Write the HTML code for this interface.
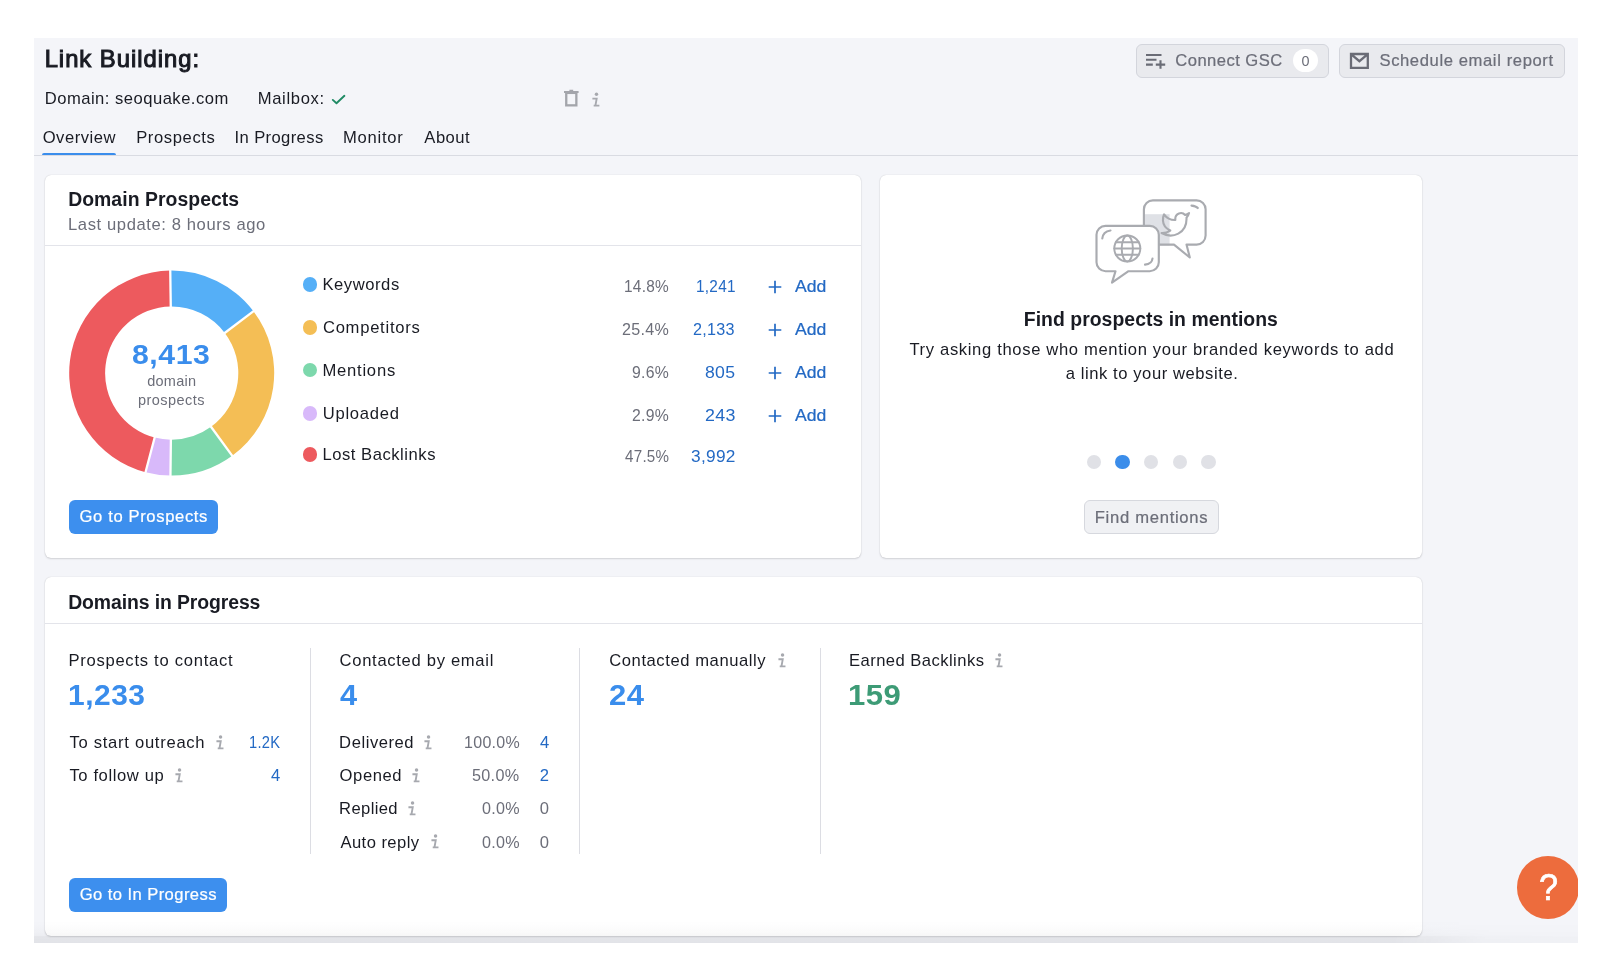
<!DOCTYPE html>
<html lang="en">
<head>
<meta charset="utf-8">
<title>Link Building: Overview</title>
<style>
*{box-sizing:border-box;margin:0;padding:0}
html,body{width:1600px;height:964px;background:#fff;overflow:hidden}
body{font-family:"Liberation Sans",sans-serif;color:#191b23;position:relative}
.app{position:absolute;left:34px;top:38px;width:1544px;height:905px;background:#f4f5f9;overflow:hidden;will-change:transform}
.t{position:absolute;line-height:1;white-space:nowrap;display:block;transform-origin:0 50%}
.sec{color:#6c6e79}
.lnk{color:#2369c4}
.big{color:#3a8dec}
.grn{color:#3d9b76}
.wht{color:#fff}
.h1{-webkit-text-stroke:1.05px #191b23}
.qm{-webkit-text-stroke:.7px #fff}
.med{-webkit-text-stroke:.22px currentColor}
.btxt{color:#6c6e79}
.bnum{color:#6c6e79}
.abs{position:absolute;display:block}
.inf{font-family:"Liberation Mono",monospace;font-style:italic;font-weight:700;color:#a9abb1;transform-origin:0 0}
/* header */
.tabs-line{position:absolute;left:0;top:117px;width:1544px;height:1px;background:#d9dbe2}
.tab-ul{position:absolute;left:8.4px;top:114.8px;width:73.6px;height:2.6px;background:#3a8dec;border-radius:2px 2px 0 0}
.btn{position:absolute;border-radius:6px;height:33.4px;border:0;padding:0;margin:0;font:inherit;color:inherit;text-align:left;cursor:pointer;display:block}
.btn.gray{background:#e9eaee;border:1px solid #d3d5dc}
.btn.blue{background:#3d8fee}
.btn.gray.lt{background:#f0f1f4;border-color:#d6d8de}
.badge{position:absolute;background:#fff;border-radius:12px}
/* cards */
.card{position:absolute;background:#fff;border-radius:6px;box-shadow:0 0 1px rgba(25,27,35,.22),0 1px 2px rgba(25,27,35,.14)}
.hr{position:absolute;left:0;height:1px;background:#e3e4ea;width:100%}
.vr{position:absolute;width:1px;background:#dcdde3}
.dot{position:absolute;border-radius:50%}
h1,h2,p{font:inherit;font-weight:inherit}
.fade{position:absolute;left:0;bottom:0;width:100%;height:22px;background:linear-gradient(to bottom,rgba(25,27,35,0) 0%,rgba(25,27,35,.012) 35%,rgba(25,27,35,.034) 66%,rgba(25,27,35,.066) 68%,rgba(25,27,35,.078) 100%);-webkit-mask-image:linear-gradient(to right,#000 0,#000 88%,rgba(0,0,0,.3) 94%,rgba(0,0,0,.25) 100%);mask-image:linear-gradient(to right,#000 0,#000 88%,rgba(0,0,0,.3) 94%,rgba(0,0,0,.25) 100%);pointer-events:none}
.help{position:absolute;border-radius:50%;background:#ed6c3d;border:0;padding:0;margin:0;font:inherit;cursor:pointer;display:block}
</style>
</head>
<body>
<div class="app">
  <header>
    <h1><span class="t h1" style="left:10.64px;top:9.00px;font-size:23.8px;letter-spacing:0.995px;">Link Building:</span></h1>
    <div class="meta">
      <span class="t" style="left:10.70px;top:53.00px;font-size:16.6px;letter-spacing:0.488px;">Domain: seoquake.com</span>
      <span class="t" style="left:223.70px;top:53.00px;font-size:16.6px;letter-spacing:0.669px;">Mailbox:</span>
      <svg class="abs" style="left:297px;top:55.5px" width="15" height="11" viewBox="0 0 15 11"><path d="M1.8 5.9 L5.5 9.2 L13.4 1.8" fill="none" stroke="#1f8a64" stroke-width="1.9" stroke-linecap="round" stroke-linejoin="round"/></svg>
      <svg class="abs" style="left:529px;top:50px" width="17" height="20" viewBox="0 0 17 20"><path d="M1 4h14.6M6.4 2.6h3.8" stroke="#a3a5ab" stroke-width="1.9" fill="none"/><rect x="3.25" y="4.9" width="10.1" height="12.45" fill="none" stroke="#a3a5ab" stroke-width="2.3"/></svg>
      <svg class="abs ico-i" style="left:558.30px;top:53.74px" width="7.89" height="15.52" viewBox="0 0 8 15"><circle cx="4.55" cy="1.95" r="1.75" fill="#a7a9af"/><path d="M0.4 6.35H4.75L3.45 13.5M1.7 13.5H7.5" fill="none" stroke="#a7a9af" stroke-width="1.9" stroke-linejoin="miter"/></svg>
    </div>
    <div class="actions">
      <button class="btn gray" style="left:1101.5px;top:6.2px;width:193.6px">
        <svg class="abs" style="left:8.8px;top:7.7px" width="22" height="18" viewBox="0 0 22 18"><path d="M1 2h15.5M1 6.8h10.5M1 11.6h6.8M10.8 11.6h9.4M15.5 7.3v8.5" fill="none" stroke="#6a6c76" stroke-width="2.1"/></svg>
        <span class="t btxt med" style="left:38.82px;top:7.80px;font-size:16.6px;letter-spacing:0.454px;">Connect GSC</span>
        <span class="badge" style="left:156.8px;top:4.1px;width:25px;height:23.2px"><span class="t bnum" style="left:8.12px;top:4.70px;font-size:14.4px;">0</span></span>
      </button>
      <button class="btn gray" style="left:1305.2px;top:6.2px;width:225.5px">
        <svg class="abs" style="left:8.85px;top:6.85px" width="21" height="18" viewBox="0 0 21 18"><path d="M2 2h16.8v13.9H2z M2.3 2.3l8.100 6.900 8.100-6.900" fill="none" stroke="#6a6c76" stroke-width="2.3" stroke-linejoin="miter"/></svg>
        <span class="t btxt med" style="left:39.28px;top:7.80px;font-size:16.6px;letter-spacing:0.609px;">Schedule email report</span>
      </button>
    </div>
    <nav class="tabs">
      <a><span class="t tab on" style="left:8.72px;top:92.00px;font-size:16.6px;letter-spacing:0.499px;">Overview</span></a><a><span class="t tab" style="left:102.20px;top:92.00px;font-size:16.6px;letter-spacing:0.613px;">Prospects</span></a><a><span class="t tab" style="left:200.60px;top:92.00px;font-size:16.6px;letter-spacing:0.374px;">In Progress</span></a><a><span class="t tab" style="left:309.05px;top:92.00px;font-size:16.6px;letter-spacing:0.729px;">Monitor</span></a><a><span class="t tab" style="left:390.35px;top:92.00px;font-size:16.6px;letter-spacing:0.478px;">About</span></a>
      <div class="tabs-line"></div>
      <div class="tab-ul"></div>
    </nav>
  </header>

  <section class="card" style="left:11px;top:137px;width:816.4px;height:382.7px">
    <span class="t ch" style="left:23.14px;top:15.00px;font-size:19.4px;letter-spacing:0.051px;font-weight:700;">Domain Prospects</span>
    <span class="t sec" style="left:23.05px;top:42.00px;font-size:16.6px;letter-spacing:0.594px;">Last update: 8 hours ago</span>
    <div class="hr" style="top:70px"></div>
    <svg class="abs" style="left:0;top:0" width="300" height="320" viewBox="0 0 300 320"><path d="M125.27 95.61A102.5 102.5 0 0 1 208.45 136.27L179.82 157.93A66.6 66.6 0 0 0 125.77 131.51Z" fill="#55aff7"/><path d="M208.45 136.27A102.5 102.5 0 0 1 187.24 280.81L166.03 251.84A66.6 66.6 0 0 0 179.82 157.93Z" fill="#f4be55"/><path d="M187.24 280.81A102.5 102.5 0 0 1 125.45 300.59L125.89 264.70A66.6 66.6 0 0 0 166.03 251.84Z" fill="#7dd8ac"/><path d="M125.45 300.59A102.5 102.5 0 0 1 100.52 297.20L109.69 262.49A66.6 66.6 0 0 0 125.89 264.70Z" fill="#d8b9fa"/><path d="M100.52 297.20A102.5 102.5 0 0 1 125.27 95.61L125.77 131.51A66.6 66.6 0 0 0 109.69 262.49Z" fill="#ed5a5e"/><path d="M125.78 132.51L125.25 94.61M179.02 158.53L209.25 135.67M165.44 251.04L187.83 281.62M125.90 263.70L125.44 301.59M109.94 261.52L100.26 298.17" stroke="#fff" stroke-width="2.3" fill="none"/></svg>
    <span class="t big" style="left:87.46px;top:166.00px;font-size:27.6px;letter-spacing:0.495px;font-weight:700;transform:scaleX(1.095);">8,413</span><span class="t sec" style="left:102.25px;top:199.00px;font-size:14.5px;letter-spacing:0.242px;">domain</span><span class="t sec" style="left:92.99px;top:218.00px;font-size:14.5px;letter-spacing:0.462px;">prospects</span>
    <div class="row">
    <span class="dot" style="left:257.80px;top:102.20px;width:14.4px;height:14.4px;background:#55aff7"></span>
    <span class="t" style="left:277.40px;top:102.00px;font-size:16.6px;letter-spacing:0.562px;">Keywords</span><span class="t sec" style="left:579.29px;top:104.00px;font-size:16.6px;letter-spacing:0.294px;transform:scaleX(0.928);">14.8%</span><span class="t lnk" style="left:650.54px;top:104.00px;font-size:16.6px;letter-spacing:0.297px;transform:scaleX(0.924);">1,241</span>
    <svg class="abs" style="left:723.20px;top:105.30px" width="14" height="14" viewBox="0 0 14 14"><path d="M.7 7h12.6M7 .7v12.6" stroke="#2369c4" stroke-width="1.7" fill="none"/></svg>
    <span class="t lnk med" style="left:750.30px;top:104.00px;font-size:16.6px;letter-spacing:0.038px;transform:scaleX(1.06);">Add</span>
    </div>
    <div class="row">
    <span class="dot" style="left:257.80px;top:145.30px;width:14.4px;height:14.4px;background:#f4be55"></span>
    <span class="t" style="left:277.92px;top:145.00px;font-size:16.6px;letter-spacing:0.741px;">Competitors</span><span class="t sec" style="left:577.25px;top:147.00px;font-size:16.6px;letter-spacing:0.304px;transform:scaleX(0.97);">25.4%</span><span class="t lnk" style="left:648.44px;top:147.00px;font-size:16.6px;letter-spacing:0.296px;transform:scaleX(0.974);">2,133</span>
    <svg class="abs" style="left:723.20px;top:147.90px" width="14" height="14" viewBox="0 0 14 14"><path d="M.7 7h12.6M7 .7v12.6" stroke="#2369c4" stroke-width="1.7" fill="none"/></svg>
    <span class="t lnk med" style="left:750.30px;top:147.00px;font-size:16.6px;letter-spacing:0.038px;transform:scaleX(1.06);">Add</span>
    </div>
    <div class="row">
    <span class="dot" style="left:257.80px;top:188.00px;width:14.4px;height:14.4px;background:#7dd8ac"></span>
    <span class="t" style="left:277.40px;top:188.00px;font-size:16.6px;letter-spacing:0.780px;">Mentions</span><span class="t sec" style="left:587.26px;top:190.00px;font-size:16.6px;letter-spacing:0.303px;transform:scaleX(0.95);">9.6%</span><span class="t lnk" style="left:660.05px;top:190.00px;font-size:16.6px;letter-spacing:0.294px;transform:scaleX(1.063);">805</span>
    <svg class="abs" style="left:723.20px;top:190.90px" width="14" height="14" viewBox="0 0 14 14"><path d="M.7 7h12.6M7 .7v12.6" stroke="#2369c4" stroke-width="1.7" fill="none"/></svg>
    <span class="t lnk med" style="left:750.30px;top:190.00px;font-size:16.6px;letter-spacing:0.038px;transform:scaleX(1.06);">Add</span>
    </div>
    <div class="row">
    <span class="dot" style="left:257.80px;top:231.30px;width:14.4px;height:14.4px;background:#d8b9fa"></span>
    <span class="t" style="left:277.66px;top:231.00px;font-size:16.6px;letter-spacing:0.757px;">Uploaded</span><span class="t sec" style="left:587.26px;top:233.00px;font-size:16.6px;letter-spacing:0.303px;transform:scaleX(0.95);">2.9%</span><span class="t lnk" style="left:659.77px;top:233.00px;font-size:16.6px;letter-spacing:0.298px;transform:scaleX(1.073);">243</span>
    <svg class="abs" style="left:723.20px;top:234.20px" width="14" height="14" viewBox="0 0 14 14"><path d="M.7 7h12.6M7 .7v12.6" stroke="#2369c4" stroke-width="1.7" fill="none"/></svg>
    <span class="t lnk med" style="left:750.30px;top:233.00px;font-size:16.6px;letter-spacing:0.038px;transform:scaleX(1.06);">Add</span>
    </div>
    <div class="row">
    <span class="dot" style="left:257.80px;top:272.40px;width:14.4px;height:14.4px;background:#ed5a5e"></span>
    <span class="t" style="left:277.40px;top:272.00px;font-size:16.6px;letter-spacing:0.540px;">Lost Backlinks</span><span class="t sec" style="left:580.01px;top:274.00px;font-size:16.6px;letter-spacing:0.305px;transform:scaleX(0.912);">47.5%</span><span class="t lnk" style="left:645.66px;top:274.00px;font-size:16.6px;letter-spacing:0.297px;transform:scaleX(1.04);">3,992</span>
    </div>
    <button class="btn blue" style="left:23.7px;top:325.3px;width:149.6px"><span class="t wht med" style="left:10.82px;top:8.70px;font-size:16.6px;letter-spacing:0.634px;">Go to Prospects</span></button>
  </section>
<section class="card" style="left:846.0px;top:137px;width:542.1px;height:382.7px">
  <svg class="abs" style="left:210.00px;top:20.00px" width="124" height="94" viewBox="0 0 124 94" fill="none" stroke="#a9abb0" stroke-width="2.15" stroke-linecap="round" stroke-linejoin="round"><rect x="54.7" y="19.2" width="24.9" height="31.2" fill="#dfe1e6" stroke="none"/><path d="M84 49.6H62.9A9 9 0 0 1 53.9 40.6V14.3A9 9 0 0 1 62.9 5.3H106.6A9 9 0 0 1 115.6 14.3V40.6A9 9 0 0 1 106.6 49.6H96.5L99.8 62.5L84 49.6Z"/><path d="M101.5 10.6Q106 11 107.8 13"/><path d="M23 3a10.9 10.9 0 0 1-3.14 1.53 4.48 4.48 0 0 0-7.86 3v1A10.66 10.66 0 0 1 3 4s-4 9 5 13a11.64 11.64 0 0 1-7 2c9 5 20 0 20-11.5a4.5 4.5 0 0 0-.08-.83A7.72 7.72 0 0 0 23 3z" transform="translate(70.3 14.3) scale(1.25)" stroke-width="1.7"/><path d="M57 76.2H59.8A9 9 0 0 0 68.8 67.2V39.8A9 9 0 0 0 59.8 30.8H15.5A9 9 0 0 0 6.5 39.8V67.2A9 9 0 0 0 15.5 76.2H25.5L22 87.6L38.5 76.2Z" fill="#fff"/><path d="M12.3 43.5Q13 36.5 20.5 35.5"/><path d="M62.5 63.5Q62 69 55 69.6"/><g stroke-width="1.95"><circle cx="37.3" cy="53.5" r="13"/><ellipse cx="37.3" cy="53.5" rx="5.6" ry="13"/><path d="M24.299999999999997 53.5h26M25.90 47.30h22.8M25.90 59.70h22.8"/></g></svg>
  <h2><span class="t ch" style="left:143.79px;top:135.00px;font-size:19.4px;letter-spacing:0.036px;font-weight:700;">Find prospects in mentions</span></h2>
  <p><span class="t" style="left:29.44px;top:167.00px;font-size:16.6px;letter-spacing:0.653px;">Try asking those who mention your branded keywords to add</span><span class="t" style="left:185.78px;top:191.00px;font-size:16.6px;letter-spacing:0.568px;">a link to your website.</span></p>
  <div class="pager">
  <span class="dot" style="left:206.80px;top:279.85px;width:14.3px;height:14.3px;background:#e0e1e6"></span>
  <span class="dot" style="left:235.45px;top:279.85px;width:14.3px;height:14.3px;background:#3b8dea"></span>
  <span class="dot" style="left:264.15px;top:279.85px;width:14.3px;height:14.3px;background:#e0e1e6"></span>
  <span class="dot" style="left:292.75px;top:279.85px;width:14.3px;height:14.3px;background:#e0e1e6"></span>
  <span class="dot" style="left:321.45px;top:279.85px;width:14.3px;height:14.3px;background:#e0e1e6"></span>
  </div>
  <button class="btn gray lt" style="left:203.90px;top:325.30px;width:135px"><span class="t btxt med" style="left:9.80px;top:8.70px;font-size:16.6px;letter-spacing:0.721px;">Find mentions</span></button>
  </section>
<section class="card" style="left:11px;top:539.4px;width:1377.1px;height:358.3px">
  <h2><span class="t ch" style="left:23.19px;top:15.60px;font-size:19.4px;letter-spacing:-0.098px;font-weight:700;">Domains in Progress</span></h2>
  <div class="hr" style="top:46.1px"></div>
  <div class="vr" style="left:264.80px;top:70.6px;height:206px"></div>
  <div class="vr" style="left:534.20px;top:70.6px;height:206px"></div>
  <div class="vr" style="left:774.80px;top:70.6px;height:206px"></div>
  <div class="col"><span class="t" style="left:23.40px;top:75.60px;font-size:16.6px;letter-spacing:0.734px;">Prospects to contact</span><span class="t big" style="left:23.33px;top:102.60px;font-size:29.6px;letter-spacing:0.508px;font-weight:700;transform:scaleX(1.012);">1,233</span>
  <span class="t" style="left:24.44px;top:157.60px;font-size:16.6px;letter-spacing:0.722px;">To start outreach</span><svg class="abs ico-i" style="left:171.30px;top:157.25px" width="8.00" height="14.90" viewBox="0 0 8 15"><circle cx="4.55" cy="1.95" r="1.75" fill="#a7a9af"/><path d="M0.4 6.35H4.75L3.45 13.5M1.7 13.5H7.5" fill="none" stroke="#a7a9af" stroke-width="1.9" stroke-linejoin="miter"/></svg><span class="t lnk" style="left:203.68px;top:157.60px;font-size:16.6px;letter-spacing:0.297px;transform:scaleX(0.884);">1.2K</span>
  <span class="t" style="left:24.44px;top:190.60px;font-size:16.6px;letter-spacing:0.606px;">To follow up</span><svg class="abs ico-i" style="left:130.40px;top:190.25px" width="8.00" height="14.90" viewBox="0 0 8 15"><circle cx="4.55" cy="1.95" r="1.75" fill="#a7a9af"/><path d="M0.4 6.35H4.75L3.45 13.5M1.7 13.5H7.5" fill="none" stroke="#a7a9af" stroke-width="1.9" stroke-linejoin="miter"/></svg><span class="t lnk" style="left:226.01px;top:190.60px;font-size:16.6px;">4</span></div>
  <div class="col"><span class="t" style="left:294.62px;top:75.60px;font-size:16.6px;letter-spacing:0.687px;">Contacted by email</span><span class="t big" style="left:295.40px;top:102.60px;font-size:29.6px;font-weight:700;transform:scaleX(1.039);">4</span>
  <span class="t" style="left:294.10px;top:157.60px;font-size:16.6px;letter-spacing:0.551px;">Delivered</span><svg class="abs ico-i" style="left:379.40px;top:157.25px" width="8.00" height="14.90" viewBox="0 0 8 15"><circle cx="4.55" cy="1.95" r="1.75" fill="#a7a9af"/><path d="M0.4 6.35H4.75L3.45 13.5M1.7 13.5H7.5" fill="none" stroke="#a7a9af" stroke-width="1.9" stroke-linejoin="miter"/></svg><span class="t sec" style="left:418.60px;top:157.60px;font-size:16.6px;letter-spacing:0.300px;transform:scaleX(0.965);">100.0%</span><span class="t lnk" style="left:494.91px;top:157.60px;font-size:16.6px;">4</span>
  <span class="t" style="left:294.62px;top:190.60px;font-size:16.6px;letter-spacing:0.588px;">Opened</span><svg class="abs ico-i" style="left:367.00px;top:190.45px" width="8.00" height="14.90" viewBox="0 0 8 15"><circle cx="4.55" cy="1.95" r="1.75" fill="#a7a9af"/><path d="M0.4 6.35H4.75L3.45 13.5M1.7 13.5H7.5" fill="none" stroke="#a7a9af" stroke-width="1.9" stroke-linejoin="miter"/></svg><span class="t sec" style="left:427.29px;top:190.60px;font-size:16.6px;letter-spacing:0.295px;transform:scaleX(0.976);">50.0%</span><span class="t lnk" style="left:494.78px;top:190.60px;font-size:16.6px;">2</span>
  <span class="t" style="left:294.10px;top:223.60px;font-size:16.6px;letter-spacing:0.373px;">Replied</span><svg class="abs ico-i" style="left:363.00px;top:223.75px" width="8.00" height="14.90" viewBox="0 0 8 15"><circle cx="4.55" cy="1.95" r="1.75" fill="#a7a9af"/><path d="M0.4 6.35H4.75L3.45 13.5M1.7 13.5H7.5" fill="none" stroke="#a7a9af" stroke-width="1.9" stroke-linejoin="miter"/></svg><span class="t sec" style="left:436.70px;top:223.60px;font-size:16.6px;letter-spacing:0.298px;transform:scaleX(0.973);">0.0%</span><span class="t sec" style="left:494.78px;top:223.60px;font-size:16.6px;">0</span>
  <span class="t" style="left:295.40px;top:257.60px;font-size:16.6px;letter-spacing:0.451px;">Auto reply</span><svg class="abs ico-i" style="left:385.50px;top:256.95px" width="8.00" height="14.90" viewBox="0 0 8 15"><circle cx="4.55" cy="1.95" r="1.75" fill="#a7a9af"/><path d="M0.4 6.35H4.75L3.45 13.5M1.7 13.5H7.5" fill="none" stroke="#a7a9af" stroke-width="1.9" stroke-linejoin="miter"/></svg><span class="t sec" style="left:436.70px;top:257.60px;font-size:16.6px;letter-spacing:0.298px;transform:scaleX(0.973);">0.0%</span><span class="t sec" style="left:494.78px;top:257.60px;font-size:16.6px;">0</span>
  </div>
  <div class="col"><span class="t" style="left:564.22px;top:75.60px;font-size:16.6px;letter-spacing:0.574px;">Contacted manually</span><svg class="abs ico-i" style="left:732.80px;top:75.60px" width="8.00" height="14.90" viewBox="0 0 8 15"><circle cx="4.55" cy="1.95" r="1.75" fill="#a7a9af"/><path d="M0.4 6.35H4.75L3.45 13.5M1.7 13.5H7.5" fill="none" stroke="#a7a9af" stroke-width="1.9" stroke-linejoin="miter"/></svg><span class="t big" style="left:564.03px;top:102.60px;font-size:29.6px;letter-spacing:0.511px;font-weight:700;transform:scaleX(1.049);">24</span></div>
  <div class="col"><span class="t" style="left:804.00px;top:75.60px;font-size:16.6px;letter-spacing:0.451px;">Earned Backlinks</span><svg class="abs ico-i" style="left:950.30px;top:75.60px" width="8.00" height="14.90" viewBox="0 0 8 15"><circle cx="4.55" cy="1.95" r="1.75" fill="#a7a9af"/><path d="M0.4 6.35H4.75L3.45 13.5M1.7 13.5H7.5" fill="none" stroke="#a7a9af" stroke-width="1.9" stroke-linejoin="miter"/></svg><span class="t big grn" style="left:803.36px;top:102.60px;font-size:29.6px;letter-spacing:0.505px;font-weight:700;transform:scaleX(1.05);">159</span></div>
  <button class="btn blue" style="left:23.80px;top:300.90px;width:158.6px"><span class="t wht med" style="left:10.92px;top:8.70px;font-size:16.6px;letter-spacing:0.425px;">Go to In Progress</span></button>
  </section>
<div class="fade"></div>
<button class="help" style="left:1482.95px;top:818.15px;width:62.5px;height:62.5px"><span class="t wht qm" style="left:22.28px;top:13.85px;font-size:36px;transform:scaleX(0.95);">?</span></button>
</div>
</body>
</html>
